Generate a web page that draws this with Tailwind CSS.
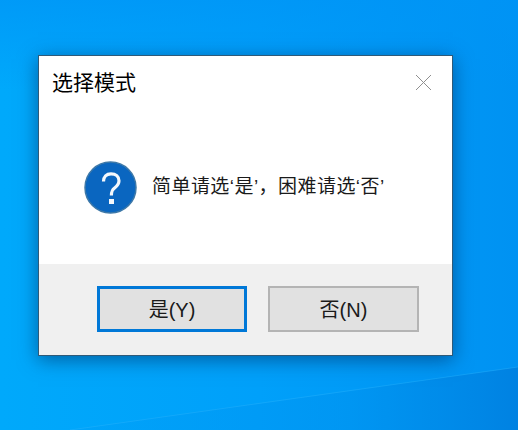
<!DOCTYPE html>
<html lang="zh">
<head>
    <meta charset="UTF-8">
    <title>选择模式</title>
    <script src="https://cdn.jsdelivr.net/npm/@tailwindcss/browser@4"></script>
</head>
<body class="relative h-[430px] w-[518px] overflow-hidden bg-gradient-to-r from-[#00a9fb] via-[#00a0fa] to-[#0092f2] font-['Liberation_Sans','Noto_Sans_CJK_SC',sans-serif]">
    <!-- desktop wallpaper streak -->
    <div class="absolute inset-x-0 top-0 h-[90px] bg-gradient-to-b from-[#0094f6]/70 to-transparent"></div>
    <svg class="absolute inset-0" width="518" height="430" viewBox="0 0 518 430">
        <defs>
            <linearGradient id="streak" x1="0" y1="0" x2="1" y2="0">
                <stop offset="0" stop-color="#009af5" stop-opacity="0.2"/>
                <stop offset="0.6" stop-color="#0094f0" stop-opacity="0.6"/>
                <stop offset="1" stop-color="#0080e0" stop-opacity="0.9"/>
            </linearGradient>
        </defs>
        <polygon points="70,430 518,367 518,430" fill="url(#streak)"/>
        <line x1="70" y1="430" x2="518" y2="367" stroke="#33b8fb" stroke-width="1" stroke-opacity="0.35"/>
    </svg>

    <div class="relative pl-[38px] pt-[55px]">
        <!-- dialog -->
        <div class="flex h-[301px] w-[415px] flex-col border border-[#2f5a78] bg-white shadow-[0_4px_18px_rgba(0,40,90,0.55)]">
            <div class="flex h-[54px] items-start justify-between pl-[13px] pr-[20px] pt-[13px]">
                <span class="text-[21px] leading-[28px] text-black">选择模式</span>
                <svg class="mt-[5px]" width="17" height="17" viewBox="0 0 17 17">
                    <path d="M1 1 L16 16 M16 1 L1 16" stroke="#8f8f8f" stroke-width="1" fill="none"/>
                </svg>
            </div>
            <div class="flex h-[154px] items-start pl-[45px] pt-[51px]">
                <svg width="53" height="53" viewBox="0 0 53 53">
                    <circle cx="26.5" cy="26.5" r="25.5" fill="#0a66c0" stroke="#3d78a8" stroke-width="1.5"/>
                    <path d="M19.5 20.5 C19.5 15.5 22.5 12.8 27 12.8 C31.8 12.8 35 15.5 35 19.8 C35 23.2 33.2 25 30.6 27 C28.2 28.8 27.4 30 27.4 34.5" stroke="#f4f8fc" stroke-width="3.2" fill="none"/>
                    <rect x="25" y="38" width="5" height="5" fill="#f4f8fc"/>
                </svg>
                <p class="ml-[15px] mt-[14px] whitespace-nowrap text-[19px] leading-[24px] tracking-[0.45px] text-[#1a1a1a]">简单请选‘是’，困难请选‘否’</p>
            </div>
            <div class="flex flex-1 items-start gap-[21px] bg-[#f0f0f0] pl-[58px] pt-[22px]">
                <button class="h-[46px] w-[150px] border-[3px] border-[#0078d7] bg-[#e1e1e1] pt-[1px] text-[20px] text-[#1a1a1a]">是(Y)</button>
                <button class="h-[46px] w-[151px] border-2 border-[#b4b4b4] bg-[#e1e1e1] pt-[1px] text-[20px] text-[#1a1a1a]">否(N)</button>
            </div>
        </div>
    </div>
</body>
</html>
